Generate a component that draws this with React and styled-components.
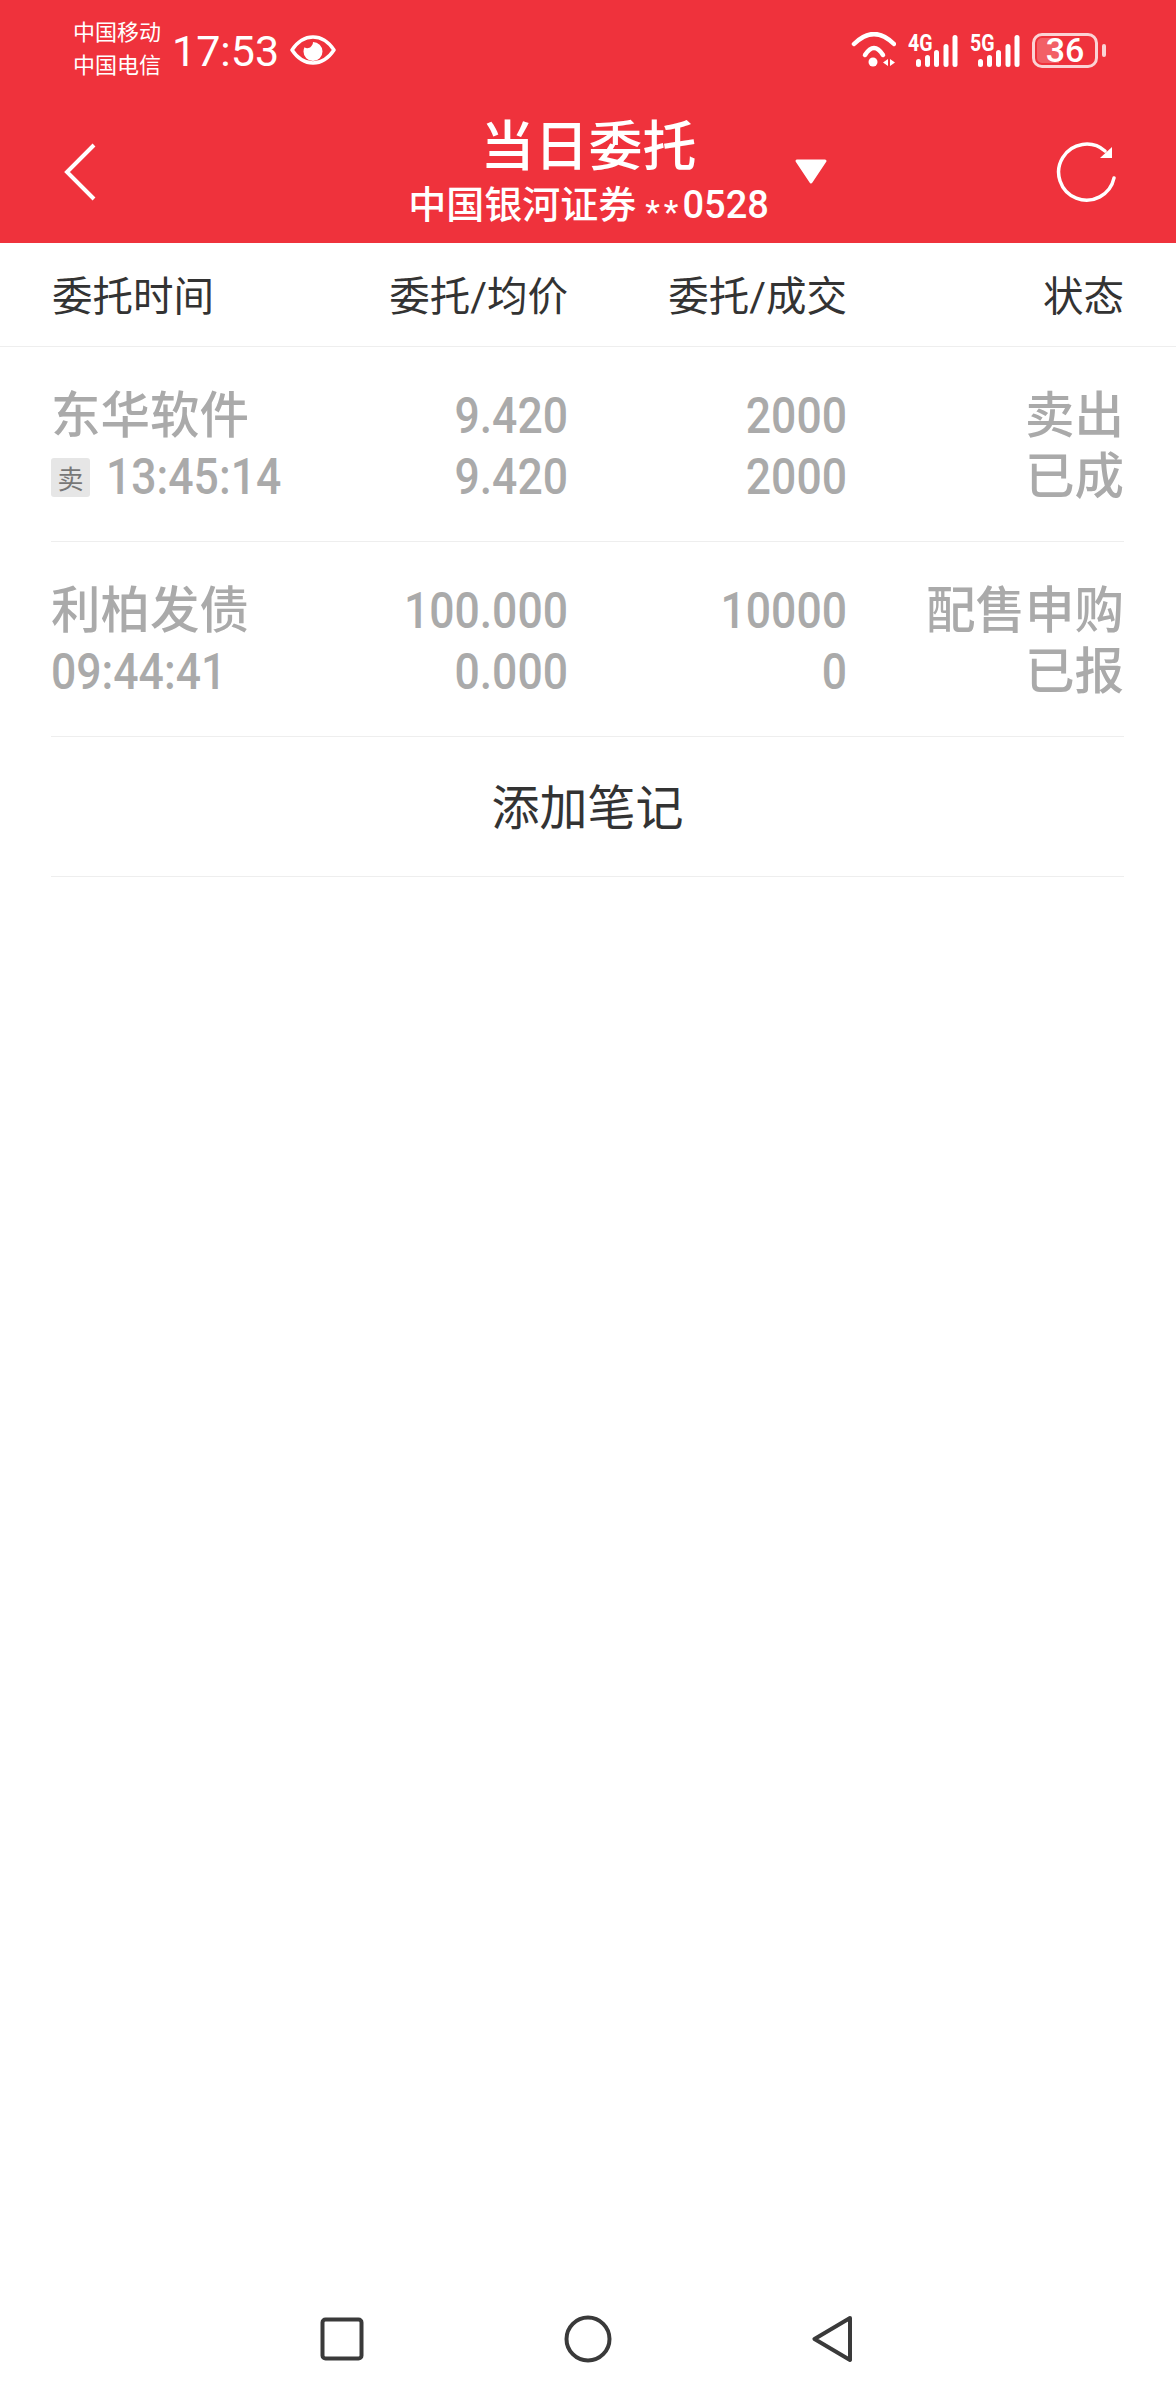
import React from "react"
import styled, { createGlobalStyle } from "styled-components"

const RED = "#ef323c"
const CJK = `Roboto, "Noto Sans CJK SC", sans-serif`

const orders = [
  {
    name: "东华软件",
    side: "卖",
    time: "13:45:14",
    price: "9.420",
    avg: "9.420",
    qty: "2000",
    done: "2000",
    action: "卖出",
    status: "已成",
  },
  {
    name: "利柏发债",
    time: "09:44:41",
    price: "100.000",
    avg: "0.000",
    qty: "10000",
    done: "0",
    action: "配售申购",
    status: "已报",
  },
]

const Signal = ({ label }) => (
  <SignalBox>
    <SignalLabel>{label}</SignalLabel>
    <svg width="50" height="36" viewBox="0 0 50 36">
      <g fill="none" stroke="#fff" strokeWidth="5" strokeLinecap="round">
        <path d="M10.5 29.500v3" />
        <path d="M19.500 25.500v7" />
        <path d="M28.500 20.500v12" />
        <path d="M38 14.500v18" />
        <path d="M47 5.500v27" />
      </g>
    </svg>
  </SignalBox>
)

export default function App() {
  return (
    <Page>
      <GlobalStyle />
      <Header>
        <StatusBar>
          <Carriers>
            <span>中国移动</span>
            <span>中国电信</span>
          </Carriers>
          <Clock>17:53</Clock>
          <EyeIcon width="46" height="30" viewBox="0 0 46 30">
            <path d="M2 15C8 6 15 2 23 2s15 4 21 13c-6 9-13 13-21 13S8 24 2 15Z" fill="none" stroke="#fff" strokeWidth="3.500" strokeLinejoin="round" />
            <path d="M23 7a9.500 9.500 0 1 1-9.500 9.500c0-1.500.4-3 1-4.200a5 5 0 0 0 7-1.300A5 5 0 0 0 23 7Z" fill="#fff" />
          </EyeIcon>
          <StatusIcons>
            <svg width="46" height="36" viewBox="-1 0 46 36">
              <g fill="none" stroke="#fff" strokeWidth="4.500" strokeLinecap="round">
                <path d="M3 12Q23 -8 43 12" />
                <path d="M14 23Q23 9 32 23" />
              </g>
              <circle cx="22" cy="30" r="4.500" fill="#fff" />
              <path d="M32 30.500 37 27v7ZM39 27l5 3.500-5 3.500Z" fill="#fff" />
            </svg>
            <Signal label="4G" />
            <Signal label="5G" />
            <Battery>
              <BatteryFill />
              <BatteryText>36</BatteryText>
            </Battery>
          </StatusIcons>
        </StatusBar>
        <NavBar>
          <BackIcon width="32" height="58" viewBox="0 0 32 58">
            <path d="M30 2 3 29l27 27" fill="none" stroke="#fff" strokeWidth="4" />
          </BackIcon>
          <TitleBlock>
            <Title>当日委托</Title>
            <Account>
              中国银河证券<Stars>**</Stars>0528
            </Account>
          </TitleBlock>
          <NavRight>
            <svg width="34" height="27" viewBox="0 0 34 27">
              <path d="M3 3h28L17 24Z" fill="#fff" stroke="#fff" strokeWidth="3" strokeLinejoin="round" />
            </svg>
            <svg width="62" height="64" viewBox="1 1 62 64">
              <path d="M59 39A28 28 0 1 1 50 12" fill="none" stroke="#fff" strokeWidth="3.500" strokeLinecap="round" />
              <path d="M57 8v11H45Z" fill="#fff" />
            </svg>
          </NavRight>
        </NavBar>
      </Header>

      <TableHead>
        <HeadCell>委托时间</HeadCell>
        <HeadCell $right>委托/均价</HeadCell>
        <HeadCell $right>委托/成交</HeadCell>
        <HeadCell $right>状态</HeadCell>
      </TableHead>

      <List>
        {orders.map(o => (
          <OrderRow key={o.name}>
            <Cell>
              <Line $text>{o.name}</Line>
              <Line>
                {o.side && <SideBadge>{o.side}</SideBadge>}
                <Num>{o.time}</Num>
              </Line>
            </Cell>
            <Cell $right>
              <Line><Num>{o.price}</Num></Line>
              <Line><Num>{o.avg}</Num></Line>
            </Cell>
            <Cell $right>
              <Line><Num>{o.qty}</Num></Line>
              <Line><Num>{o.done}</Num></Line>
            </Cell>
            <Cell $right>
              <Line $text>{o.action}</Line>
              <Line $text>{o.status}</Line>
            </Cell>
          </OrderRow>
        ))}
        <AddNote>添加笔记</AddNote>
      </List>

      <SystemNav>
        <svg width="44" height="44" viewBox="0 0 44 44">
          <rect x="2.500" y="2.500" width="39" height="39" rx="3" fill="none" stroke="#3a3a3a" strokeWidth="4" />
        </svg>
        <svg width="48" height="48" viewBox="0 0 48 48">
          <circle cx="24" cy="24" r="21.500" fill="none" stroke="#3a3a3a" strokeWidth="4" />
        </svg>
        <svg width="44" height="48" viewBox="0 0 44 48">
          <path d="M38 3 2.500 24 38 45Z" fill="none" stroke="#3a3a3a" strokeWidth="4" strokeLinejoin="round" />
        </svg>
      </SystemNav>
    </Page>
  )
}

const GlobalStyle = createGlobalStyle`
  html, body {
    margin: 0;
    padding: 0;
    background: #fff;
  }
`

const Page = styled.div`
  width: 1176px;
  height: 2400px;
  display: flex;
  flex-direction: column;
  font-family: ${CJK};
  background: #fff;
`

const Header = styled.header`
  height: 243px;
  background: ${RED};
  color: #fff;
`

const StatusBar = styled.div`
  height: 100px;
  display: flex;
  align-items: center;
  padding: 0 71px 0 73px;
`

const Carriers = styled.div`
  display: flex;
  flex-direction: column;
  font-size: 22px;
  line-height: 33px;
  margin-top: -2px;
`

const Clock = styled.div`
  font-size: 43px;
  line-height: 50px;
  margin: 2px 0 0 11px;
`

const EyeIcon = styled.svg`
  margin-left: 11px;
`

const StatusIcons = styled.div`
  margin-left: auto;
  display: flex;
  align-items: center;
`

const SignalBox = styled.div`
  position: relative;
  display: flex;
  margin-left: 12px;
`

const SignalLabel = styled.span`
  position: absolute;
  left: 0;
  top: 0;
  font-size: 23px;
  font-weight: 700;
  line-height: 24px;
  transform: scaleX(0.85);
  transform-origin: left center;
`

const Battery = styled.div`
  position: relative;
  width: 66px;
  height: 35px;
  margin-left: 12px;
  margin-right: 7px;
  box-sizing: border-box;
  border: 3px solid #fbd3d5;
  border-radius: 10px;
  display: flex;
  align-items: center;
  justify-content: center;

  &::after {
    content: "";
    position: absolute;
    right: -11px;
    top: 8px;
    width: 4px;
    height: 13px;
    border-radius: 2px;
    background: #fbd3d5;
  }
`

const BatteryFill = styled.div`
  position: absolute;
  left: 2px;
  top: 2px;
  bottom: 2px;
  width: 22px;
  border-radius: 5px 0 0 5px;
  background: rgba(255, 255, 255, 0.22);
`

const BatteryText = styled.span`
  position: relative;
  font-size: 34px;
  font-weight: 500;
  line-height: 1;
`

const NavBar = styled.div`
  height: 143px;
  box-sizing: border-box;
  display: grid;
  grid-template-columns: 1fr auto 1fr;
  align-items: center;
  padding: 0 58px 0 59px;
`

const BackIcon = styled.svg`
  margin-left: 5px;
`

const TitleBlock = styled.div`
  display: flex;
  flex-direction: column;
  align-items: center;
  padding-top: 7px;
`

const Title = styled.div`
  font-size: 54px;
  font-weight: 500;
  line-height: 66px;
  margin-bottom: 1px;
`

const Account = styled.div`
  font-size: 38px;
  font-weight: 500;
  line-height: 47px;
`

const Stars = styled.span`
  font-size: 34px;
  font-weight: 400;
  letter-spacing: 4px;
  margin-left: 9px;
  vertical-align: -6px;
`

const NavRight = styled.div`
  display: flex;
  align-items: center;
  justify-content: space-between;
  padding-left: 25px;
`

const TableHead = styled.div`
  height: 104px;
  box-sizing: border-box;
  display: grid;
  grid-template-columns: 1fr 230px 279px 277px;
  align-items: center;
  padding: 0 52px 2px;
  border-bottom: 1px solid #eeeeee;
`

const HeadCell = styled.div`
  font-size: 40.500px;
  color: #333;
  text-align: ${props => (props.$right ? "right" : "left")};
`

const List = styled.div`
  margin: 0 52px 0 51px;
`

const OrderRow = styled.div`
  display: grid;
  grid-template-columns: 1fr 230px 279px 277px;
  padding: 38px 0 34px;
  border-bottom: 1px solid #eeeeee;
`

const Cell = styled.div`
  display: flex;
  flex-direction: column;
  align-items: ${props => (props.$right ? "flex-end" : "flex-start")};
`

const Line = styled.div`
  height: 61px;
  box-sizing: border-box;
  padding: ${props => (props.$text ? "0 0 8px" : "1px 0 0")};
  display: flex;
  align-items: center;
  font-size: 49.500px;
  font-weight: 500;
  color: #aaaaaa;
`

const Num = styled.span`
  display: inline-block;
  font-size: 44.500px;
  line-height: 45px;
  transform: scaleY(1.12);
`

const SideBadge = styled.span`
  width: 39px;
  height: 39px;
  margin-right: 16px;
  border-radius: 3px;
  background: #e6e6e6;
  color: #777;
  font-size: 26px;
  font-weight: 400;
  display: flex;
  align-items: center;
  justify-content: center;
`

const AddNote = styled.div`
  height: 140px;
  box-sizing: border-box;
  padding-bottom: 6px;
  display: flex;
  align-items: center;
  justify-content: center;
  font-size: 48px;
  color: #333;
  border-bottom: 1px solid #eeeeee;
`

const SystemNav = styled.nav`
  margin-top: auto;
  padding-bottom: 37px;
  display: grid;
  grid-template-columns: repeat(3, 246px);
  justify-content: center;
  justify-items: center;
  align-items: center;
`
